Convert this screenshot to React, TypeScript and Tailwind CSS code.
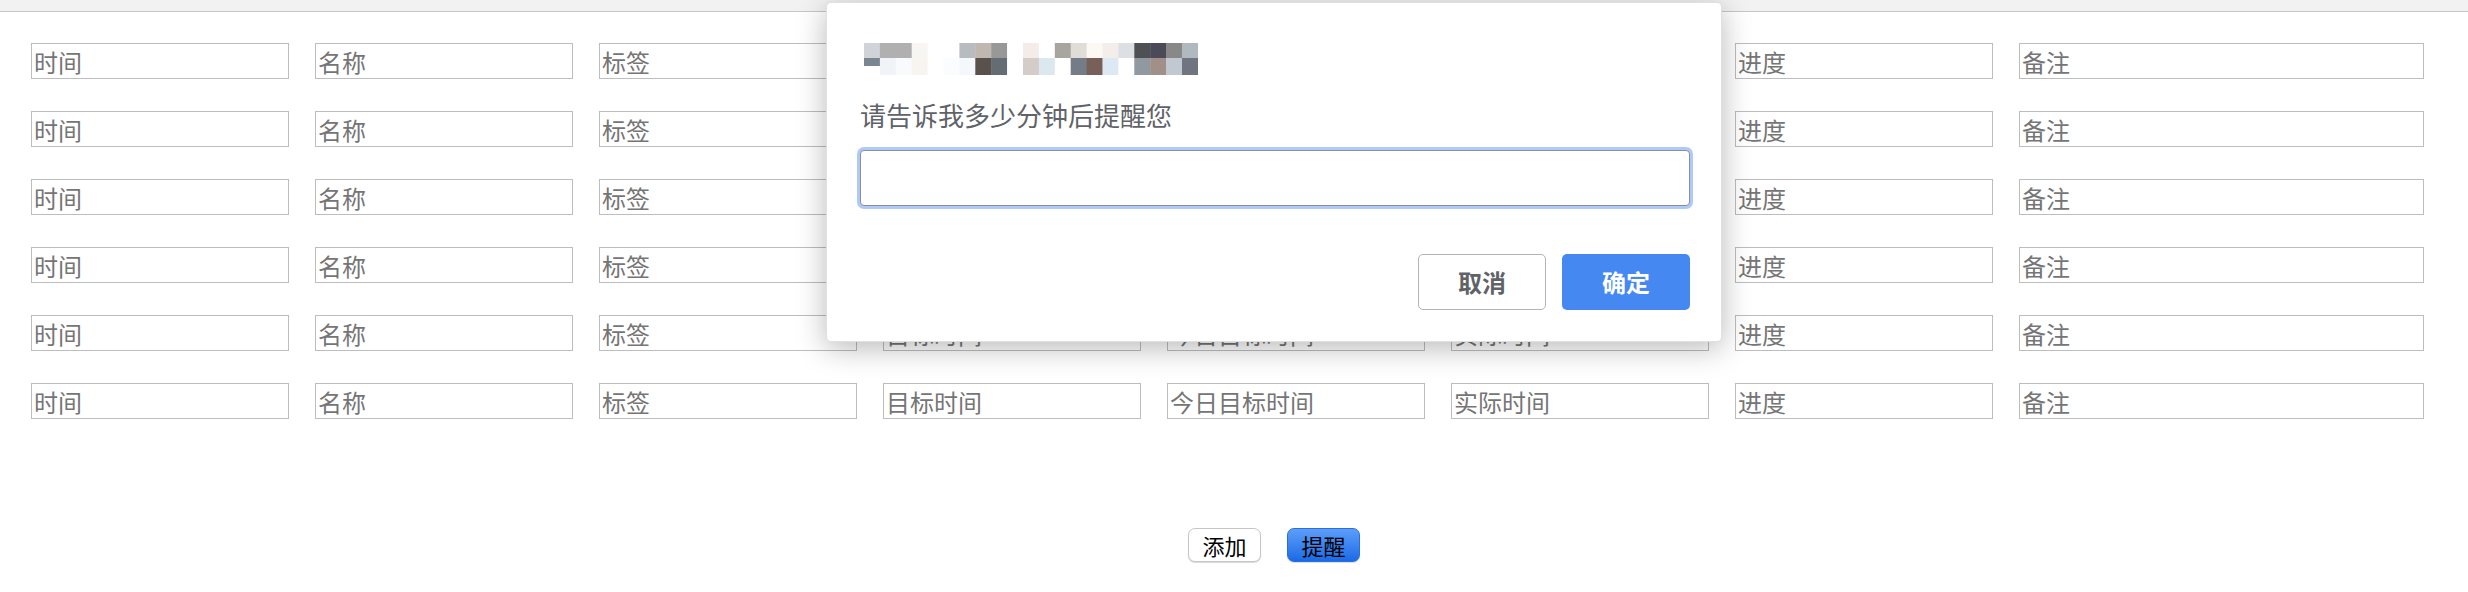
import React from "react";

const FONT = { fontFamily: '"Noto Sans CJK SC", "Noto Sans", sans-serif' };

const labels = ["时间", "名称", "标签", "目标时间", "今日目标时间", "实际时间", "进度", "备注"];

const row1 = [
  "#d0d4d8", "#b0b0b0", "#b0b0b0", "#f8f6f2", "#ffffff", "#ffffff", "#b8bcc0", "#c0b8b0", "#989898", "#ffffff", "#f4ece8",
  "#ffffff", "#a8a4a0", "#e0dcd8", "#fcf8f4", "#f4eeea", "#dce0e4", "#4e5054", "#4a4a58", "#888888", "#b0b8c0",
];
const row2 = [
  "#7a8690", "#f0f4f8", "#f8fafc", "#f8f4f0", "#ffffff", "#fafcfe", "#f4f8fc", "#5a504c", "#646c74", "#ffffff", "#d4ccc8",
  "#dce8f0", "#ffffff", "#747c88", "#786058", "#dce8f4", "#ffffff", "#9098a0", "#a09088", "#c0c8d0", "#707480",
];

function Mosaic() {
  const w = 15.9;
  return (
    <svg width="334" height="32" viewBox="0 0 334 32" className="block">
      {row1.map((c, i) => (
        <rect key={"a" + i} x={i * w} y={0} width={w + 0.4} height={15} fill={c} />
      ))}
      {row2.map((c, i) => (
        <rect key={"b" + i} x={i * w} y={15} width={w + 0.4} height={i === 0 ? 8 : 17} fill={c} />
      ))}
    </svg>
  );
}

function Field({ label, wide }: { label: string; wide?: boolean }) {
  return (
    <input
      readOnly
      placeholder={label}
      className={`${wide ? "w-[405px]" : "w-[258px]"} h-[36px] shrink-0 border border-[#bdbdbd] bg-white pl-[2px] text-[24px] leading-[34px] text-black outline-none placeholder:text-[#757575]`}
      style={FONT}
    />
  );
}

export default function App() {
  return (
    <div className="relative w-[2468px] h-[592px] bg-white overflow-hidden" style={FONT}>
      <div className="h-[12px] bg-[#f2f2f2] border-b border-[#c6c6c6]" />
      <div className="flex flex-col gap-[32px] pt-[31px]">
        {Array.from({ length: 6 }).map((_, r) => (
          <div key={r} className="flex gap-[26px] pl-[31px]">
            {labels.map((l, i) => (
              <Field key={i} label={l} wide={i === 7} />
            ))}
          </div>
        ))}
      </div>
      <div className="flex justify-center gap-[26px] pl-[80px] mt-[109px]">
        <button
          className="w-[73px] h-[34px] rounded-[7px] border border-[#c6c6c6] bg-white text-[22px] leading-none text-black shadow-[0_1px_1px_rgba(0,0,0,0.15)]"
          style={FONT}
        >
          添加
        </button>
        <button
          className="w-[73px] h-[34px] rounded-[7px] border border-[#2b6fdc] bg-gradient-to-b from-[#5c9ef9] to-[#196ae6] text-[22px] leading-none text-black shadow-[0_1px_1px_rgba(0,0,0,0.15)]"
          style={FONT}
        >
          提醒
        </button>
      </div>

      <div className="absolute left-[826px] top-[2px] w-[896px] h-[340px] rounded-[5px] bg-white border border-[rgba(0,0,0,0.12)] shadow-[0_6px_30px_rgba(0,0,0,0.28)] flex flex-col pl-[33px] pr-[31px] pt-[40px]">
        <div className="ml-[4px]">
          <Mosaic />
        </div>
        <div className="mt-[20px] text-[26px] leading-[39px] text-[#5f6368]" style={FONT}>
          请告诉我多少分钟后提醒您
        </div>
        <input
          readOnly
          className="mt-[16px] h-[56px] w-full rounded-[4px] border border-[#8e8e8e] bg-white outline-none shadow-[0_0_0_3px_#aecafa]"
        />
        <div className="mt-[48px] flex justify-end gap-[16px]">
          <button
            className="w-[128px] h-[56px] rounded-[5px] border border-[#b4b4b4] bg-white text-[24px] font-semibold text-[#5f6368]"
            style={FONT}
          >
            取消
          </button>
          <button
            className="w-[128px] h-[56px] rounded-[5px] bg-[#4688f1] text-[24px] font-semibold text-white"
            style={FONT}
          >
            确定
          </button>
        </div>
      </div>
    </div>
  );
}
